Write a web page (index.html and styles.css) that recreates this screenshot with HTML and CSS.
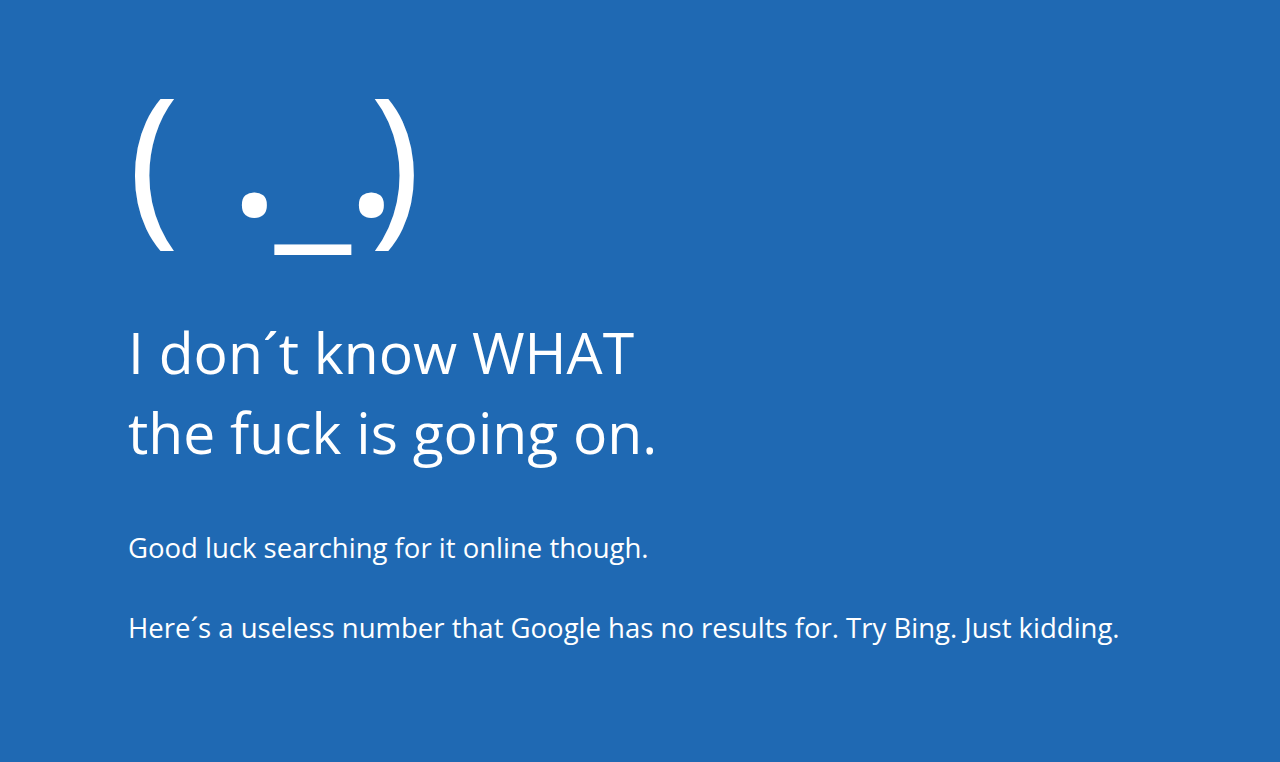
FILE: index.html
```html
<!DOCTYPE html>
<html lang="en">
<head>
<meta charset="utf-8">
<title>Error</title>
<link rel="stylesheet" href="styles.css">
</head>
<body>
<main class="screen">
  <div class="face"><span class="lp">(</span> <span class="mouth"><span class="dot">.</span><span class="line">_</span><span class="dot">.</span></span><span class="rp">)</span></div>
  <h1 class="title">I don´t know WHAT<br>the fuck is going on.</h1>
  <p class="msg">Good luck searching for it online though.</p>
  <p class="msg">Here´s a useless number that Google has no results for. Try Bing. Just kidding.</p>
</main>
</body>
</html>
```
FILE: styles.css
```css
html, body {
  margin: 0;
  padding: 0;
  height: 100%;
}
body {
  background: #1f69b3;
  color: #ffffff;
  font-family: "Open Sans", "Noto Sans", sans-serif;
  overflow: hidden;
}
.screen {
  display: flex;
  flex-direction: column;
  align-items: flex-start;
  padding: 46px 0 0 128px;
}
.face {
  font-size: 174px;
  font-weight: 400;
  line-height: 220px;
  white-space: pre;
}
.mouth {
  margin-left: 6px;
  letter-spacing: -3.5px;
}
.dot {
  line-height: 0;
  vertical-align: 7px;
  font-weight: 600;
}
.line {
  line-height: 0;
  vertical-align: -6px;
}
.rp {
  margin-left: -22px;
}
.title {
  margin: 46px 0 0 0;
  font-size: 57px;
  font-weight: 400;
  line-height: 80px;
}
.msg {
  margin: 56px 0 0 0;
  font-size: 27.5px;
  font-weight: 400;
  line-height: 40px;
}
.msg + .msg {
  margin-top: 40px;
}
```
